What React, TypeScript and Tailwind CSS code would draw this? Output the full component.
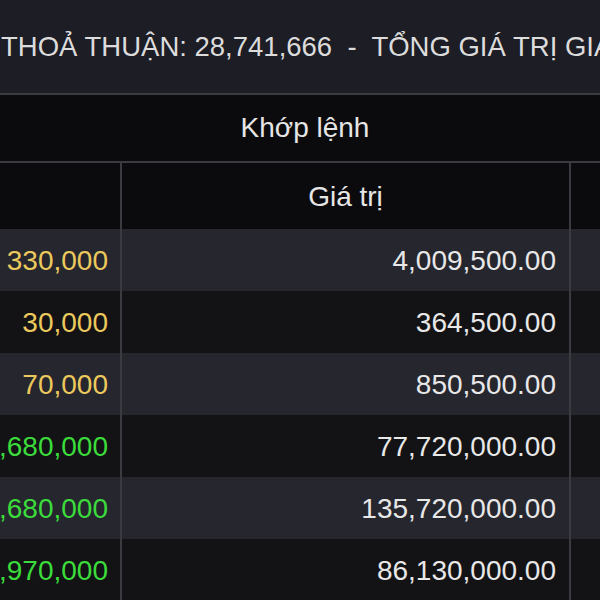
import React from "react";

type Row = { vol: string; value: string; color: "yellow" | "green"; light: boolean };

const rows: Row[] = [
  { vol: "330,000", value: "4,009,500.00", color: "yellow", light: true },
  { vol: "30,000", value: "364,500.00", color: "yellow", light: false },
  { vol: "70,000", value: "850,500.00", color: "yellow", light: true },
  { vol: "6,680,000", value: "77,720,000.00", color: "green", light: false },
  { vol: "11,680,000", value: "135,720,000.00", color: "green", light: true },
  { vol: "7,970,000", value: "86,130,000.00", color: "green", light: false },
];

export default function App() {
  return (
    <div className="w-[600px] h-[600px] overflow-hidden bg-[#0b0b0d] font-['Liberation_Sans',Arial,sans-serif] flex flex-col">
      {/* Banner */}
      <div className="h-[95px] shrink-0 bg-[#1d1d25] flex items-center overflow-hidden border-b-2 border-[#3a3a40]">
        <span className="whitespace-pre text-[27.5px] text-[#dcdcdc] pl-[1px]">
          THOẢ THUẬN: 28,741,666  -  TỔNG GIÁ TRỊ GIAO DỊCH
        </span>
      </div>

      {/* Group header */}
      <div className="h-[68px] shrink-0 bg-[#0b0b0d] flex items-center justify-center pl-[10px] border-b-2 border-[#3a3a40]">
        <span className="text-[28px] text-[#e6e6e6] whitespace-nowrap">Khớp lệnh</span>
      </div>

      {/* Column header */}
      <div className="h-[66px] shrink-0 flex bg-[#0b0b0d]">
        <div className="w-[122px] shrink-0 border-r-2 border-[#3a3a40]" />
        <div className="w-[449px] shrink-0 flex items-center justify-center pt-[2px] border-r-2 border-[#3a3a40]">
          <span className="text-[28px] text-[#e6e6e6]">Giá trị</span>
        </div>
        <div className="flex-1" />
      </div>

      {/* Data rows */}
      {rows.map((r, i) => (
        <div
          key={i}
          className={`h-[62px] shrink-0 flex ${r.light ? "bg-[#26262e]" : "bg-[#131315]"}`}
        >
          <div className="w-[122px] shrink-0 flex items-center justify-end overflow-hidden pr-[12px] pt-[2px] border-r-2 border-[#3a3a40]">
            <span
              className={`text-[28px] whitespace-nowrap ${
                r.color === "yellow" ? "text-[#ecc95c]" : "text-[#3bdc3b]"
              }`}
            >
              {r.vol}
            </span>
          </div>
          <div className="w-[449px] shrink-0 flex items-center justify-end pr-[13px] pt-[2px] border-r-2 border-[#3a3a40]">
            <span className="text-[28px] text-[#e8e8e8] whitespace-nowrap">{r.value}</span>
          </div>
          <div className="flex-1" />
        </div>
      ))}
    </div>
  );
}
